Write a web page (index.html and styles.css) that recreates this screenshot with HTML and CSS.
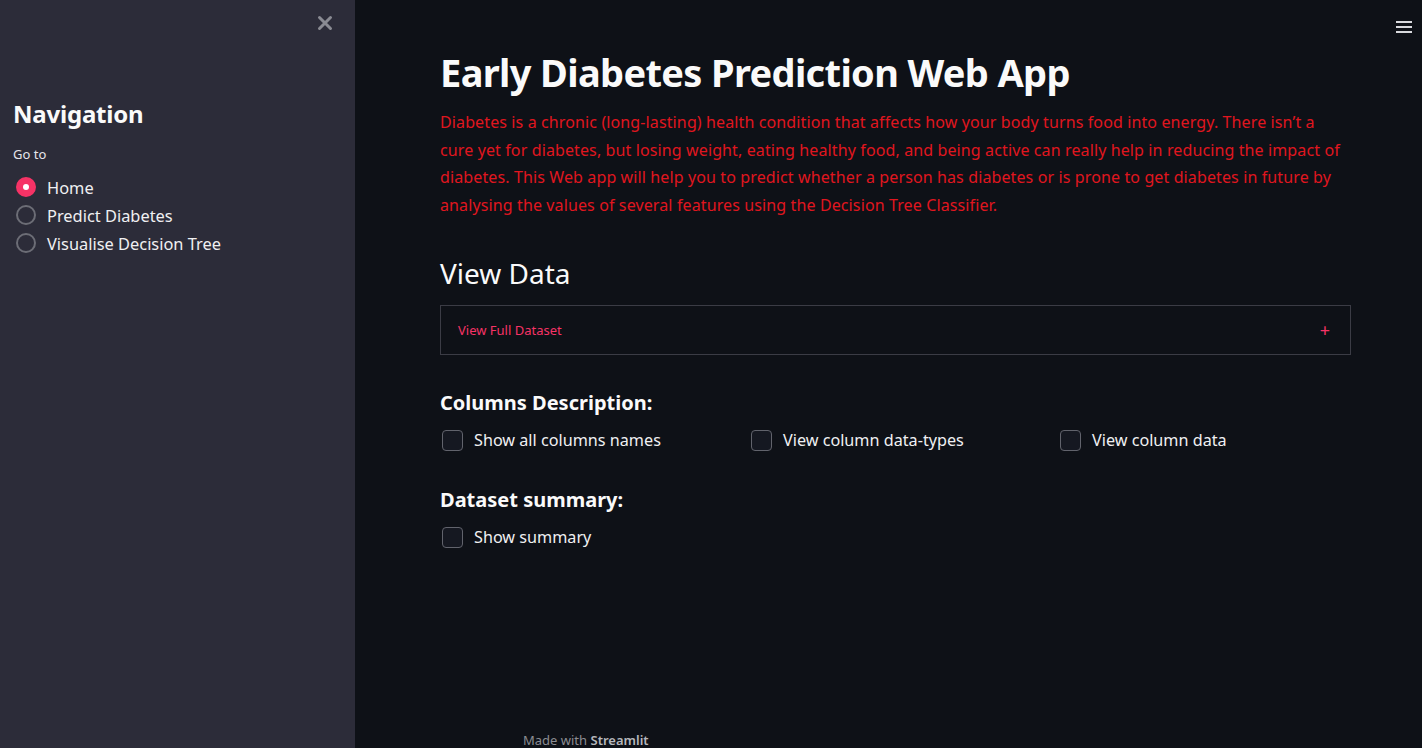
FILE: index.html
```html
<!DOCTYPE html>
<html>
<head>
<meta charset="utf-8">
<link rel="stylesheet" href="styles.css">
</head>
<body>
<div class="app">
  <aside class="sidebar">
    <div class="sb-top">
      <button class="close-btn" aria-label="Close sidebar">
        <svg width="16" height="16" viewBox="0 0 16 16"><path d="M2.5 2.5 L13.5 13.5 M13.5 2.5 L2.5 13.5" stroke="#8a8b93" stroke-width="3" stroke-linecap="round"/></svg>
      </button>
    </div>
    <h2 class="nav-title">Navigation</h2>
    <div class="go-to">Go to</div>
    <div class="radio-group">
      <label class="radio selected"><span class="radio-dot"></span><span>Home</span></label>
      <label class="radio"><span class="radio-dot"></span><span>Predict Diabetes</span></label>
      <label class="radio"><span class="radio-dot"></span><span>Visualise Decision Tree</span></label>
    </div>
  </aside>
  <main class="main">
    <div class="menu-btn">
      <svg width="16" height="14" viewBox="0 0 16 14"><rect x="0" y="1" width="16" height="2" fill="#d8d9dd"/><rect x="0" y="6" width="16" height="2" fill="#d8d9dd"/><rect x="0" y="11" width="16" height="2" fill="#d8d9dd"/></svg>
    </div>
    <div class="content">
      <h1 class="title">Early Diabetes Prediction Web App</h1>
      <p class="intro">Diabetes is a chronic (long-lasting) health condition that affects how your body turns food into energy. There isn’t a cure yet for diabetes, but losing weight, eating healthy food, and being active can really help in reducing the impact of diabetes. This Web app will help you to predict whether a person has diabetes or is prone to get diabetes in future by analysing the values of several features using the Decision Tree Classifier.</p>
      <h2 class="section">View Data</h2>
      <div class="expander">
        <span class="exp-label">View Full Dataset</span>
        <span class="exp-plus">+</span>
      </div>
      <h3 class="sub">Columns Description:</h3>
      <div class="cols">
        <label class="check"><span class="box"></span><span>Show all columns names</span></label>
        <label class="check"><span class="box"></span><span>View column data-types</span></label>
        <label class="check"><span class="box"></span><span>View column data</span></label>
      </div>
      <h3 class="sub sub2">Dataset summary:</h3>
      <div class="cols">
        <label class="check"><span class="box"></span><span>Show summary</span></label>
      </div>
    </div>
    <footer class="footer">Made with <b>Streamlit</b></footer>
  </main>
</div>
</body>
</html>
```
FILE: styles.css
```css
* { box-sizing: border-box; }
html, body { margin: 0; padding: 0; height: 100%; }
body {
  font-family: "Noto Sans", "Open Sans", sans-serif;
  background: #0e1117;
  color: #fafafa;
  overflow: hidden;
}
.app { display: flex; height: 748px; }
.sidebar {
  width: 355px;
  flex: none;
  background: #2c2c39;
  padding: 0 13px;
}
.sb-top { display: flex; justify-content: flex-end; height: 98px; padding-top: 15px; padding-right: 9px; }
.close-btn { background: none; border: 0; padding: 0; width: 16px; height: 16px; }
.nav-title { margin: 0; font-size: 24px; font-weight: 700; line-height: 32px; color: #fafafa; letter-spacing: -0.2px; }
.go-to { font-size: 13px; margin-top: 16px; line-height: 16px; color: #e6e6ea; }
.radio-group { margin-top: 11px; display: flex; flex-direction: column; }
.radio { display: flex; align-items: center; height: 28px; font-size: 16.4px; color: #f0f0f2; }
.radio-dot {
  width: 20px; height: 20px; border-radius: 50%;
  border: 2px solid #6c6d76; margin: 0 11px 0 3px; flex: none;
  display: flex; align-items: center; justify-content: center;
}
.radio.selected .radio-dot { background: #f63366; border-color: #f63366; }
.radio.selected .radio-dot::after { content: ""; width: 6px; height: 6px; border-radius: 50%; background: #fff; }

.main { flex: 1; position: relative; display: flex; flex-direction: column; }
.menu-btn { position: absolute; top: 17px; right: 10px; }
.content { width: 911px; margin-left: 85px; padding-top: 48px; flex: 1; }
.title { margin: 0; font-size: 38px; font-weight: 700; line-height: 48px; letter-spacing: -0.65px; }
.intro { margin: 13px 0 0; font-size: 16px; line-height: 27.5px; color: #e0161f; letter-spacing: 0.12px; }
.section { margin: 34px 0 0; font-size: 28px; font-weight: 400; line-height: 40px; }
.expander {
  margin-top: 12px; height: 50px; border: 1px solid #3b3c45;
  display: flex; align-items: center; justify-content: space-between;
  padding: 0 20px 0 17px;
}
.exp-label { font-size: 13px; color: #f63366; }
.exp-plus { font-size: 18px; color: #f63366; }
.sub { margin: 34px 0 0; font-size: 20px; font-weight: 700; line-height: 28px; }
.sub2 { margin-top: 31px; }
.cols { display: grid; grid-template-columns: repeat(3, 293px); column-gap: 16px; margin-top: 8px; }
.check { display: flex; align-items: center; height: 30px; font-size: 16.2px; color: #f0f0f2; }
.box { width: 21px; height: 21px; border: 1.5px solid #61636c; border-radius: 4px; background: #151821; margin: 0 11px 0 2px; flex: none; }
.footer { height: 30px; padding-left: 168px; font-size: 13px; color: #8b8c92; line-height: 20px; padding-top: 12px; }
.footer b { font-weight: 600; color: #b6b7bc; }
```
